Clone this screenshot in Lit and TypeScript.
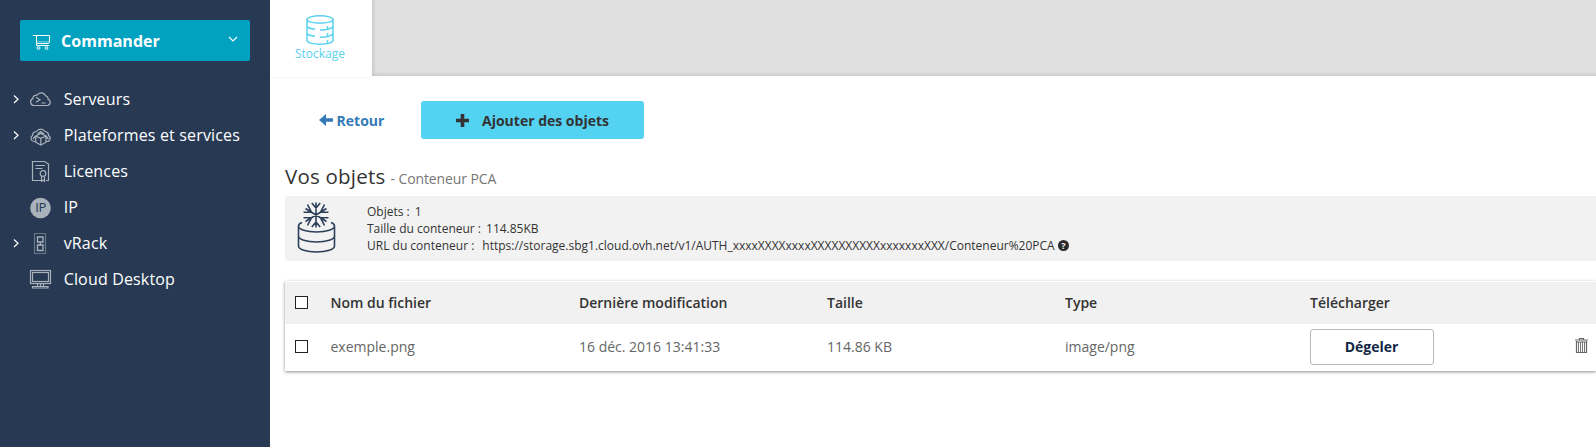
import { LitElement, html, css, svg } from "lit";
import { customElement } from "lit/decorators.js";

const icons: Record<string, unknown> = {
  server: svg`<path d="M4.500 14.500H4A3.600 3.600 0 0 1 2.800 7.600C3 5 5 3.900 7 4.200A4.800 4.800 0 0 1 15.500 4.800C17.300 5 18.300 6.500 18 8.300A3.200 3.200 0 0 1 17.500 14.500Z"/><path d="M6 6.200l4 2.500-4 2.500M11.500 12h4"/>`,
  platform: svg`<path d="M5.500 14.500H4A3.300 3.300 0 0 1 2.500 8.500C2.500 6 4.500 4.500 6.500 4.500A5 5 0 0 1 15 4.500C17.500 5 18.700 6.500 18.500 8.500A3.200 3.200 0 0 1 17 14.500H16"/><path d="M5.700 9 10.800 6.500 16 9v6.200l-5.200 2.800-5.100-2.800ZM5.700 9l5.100 2.400L16 9M10.800 11.400v6.600M7.500 7l3.300-2.500L14 7M3 12l2.500-3M18.500 12l-2.500-3"/>`,
  licence: svg`<path d="M11 17.500H2.500V-1.500h12l4 2.500v16.500H16"/><path d="M5.500 2.500h9.500M5.500 5.500h7"/><circle cx="13" cy="10.500" r="2.800"/><path d="M11.500 13.500v4.800l1.500-1.300 1.500 1.300v-4.800"/>`,
  ip: svg`<circle cx="10.500" cy="9" r="10.300" fill="#a9b1bb" stroke="none"/><text x="10.600" y="13.400" text-anchor="middle" font-size="13" fill="#283a53" stroke="none">IP</text>`,
  vrack: svg`<rect x="4.500" y="-1.500" width="11" height="20" stroke-dasharray="1 1"/><path d="M7.500 2h5.500v5h-5.500ZM7.500 10h5.500v5.500h-5.500ZM10.300 7v3" stroke-width="1.300"/>`,
  desktop: svg`<rect x=".5" y="-.5" width="20" height="13"/><rect x="2.500" y="1.500" width="16" height="9"/><path d="M7.500 12.500v3M13.500 12.500v3M10.500 12.500v3M2.500 15.500h15.500v1.500H2.500Z"/>`,
};

const menu = [
  { label: "Serveurs", icon: "server", open: true },
  { label: "Plateformes et services", icon: "platform", open: true },
  { label: "Licences", icon: "licence", open: false },
  { label: "IP", icon: "ip", open: false },
  { label: "vRack", icon: "vrack", open: true },
  { label: "Cloud Desktop", icon: "desktop", open: false },
];

@customElement("side-menu")
class SideMenu extends LitElement {
  static styles = css`
    :host { display: block; flex: 0 0 270px; box-sizing: border-box; padding: 20px 0 0; background: #283a53; color: #fff; font-size: 16px; }
    .order { display: flex; align-items: center; box-sizing: border-box; width: 230px; height: 41px; margin: 0 20px 20px; padding: 0 12px; border-radius: 2px; background: #00a2bf; font-weight: 700; letter-spacing: 0.03px; }
    .cart { width: 19px; height: 17px; margin: 4px 10px 0 0; }
    .down { width: 10px; height: 8px; margin: 0 0 4px auto; }
    svg { display: block; fill: none; stroke: #fff; overflow: visible; }
    .item { display: flex; align-items: center; height: 36px; letter-spacing: 0.16px; }
    .arrow { width: 6px; height: 10px; margin-left: 13px; }
    .hidden { visibility: hidden; }
    .icon { width: 21px; height: 18px; margin: 2px 12.700px 0 11px; stroke: #a9b1bb; stroke-width: 1.2; letter-spacing: -0.3px; }
  `;
  render() {
    return html`
      <div class="order">
        <svg class="cart" viewBox="0 0 19 17"><path d="M1 1.500h16.500v6.500l-1 1.500H4.500V2M4.500 9.500v2h13"/><path d="M5 7.800h12" stroke-opacity=".5"/><circle cx="6.500" cy="14" r="1.400"/><circle cx="14.500" cy="14" r="1.400"/></svg>
        <span>Commander</span>
        <svg class="down" viewBox="0 0 10 8"><path d="M1 2l4 4 4-4" stroke-width="1.100"/></svg>
      </div>
      ${menu.map((m) => html`<div class="item">
        <svg class="arrow ${m.open ? "" : "hidden"}" viewBox="0 0 6 10"><path d="M1 1.500 5 5.200 1 9" stroke-width="1.200"/></svg>
        <svg class="icon" viewBox="0 0 21 18">${icons[m.icon]}</svg>
        <span>${m.label}</span>
      </div>`)}
    `;
  }
}

@customElement("object-table")
class ObjectTable extends LitElement {
  static styles = css`
    :host { display: block; margin-top: 20px; padding-top: 1px; background: #fff; box-shadow: 0 1px 3px rgba(0, 0, 0, 0.45); font-size: 14px; line-height: 19px; color: #666; }
    .row { display: grid; grid-template-columns: 45.500px 248.500px 248px 238px 245px 1fr; align-items: center; height: 45px; padding-bottom: 2px; }
    .head { height: 42px; padding: 0; background: #f1f1f1; color: #333; font-weight: 600; }
    .cell { padding-bottom: 1px; }
    .check { width: 11px; height: 11px; margin: 0 0 1px 10px; border: 1px solid #222; background: #fff; }
    .action { display: flex; align-items: center; justify-content: space-between; padding-right: 8px; }
    .thaw { box-sizing: border-box; width: 124px; height: 36px; border: 1px solid #b7b7b7; border-radius: 3px; background: #fff; color: #122844; font: 700 14px/34px "Open Sans", sans-serif; padding: 0 1px 0 0; }
    .trash { width: 13px; height: 16px; margin-top: -3px; fill: none; stroke: #666; }
  `;
  render() {
    return html`
      <div class="row head">
        <div class="check"></div><div class="cell">Nom du fichier</div><div class="cell">Dernière modification</div><div class="cell">Taille</div><div class="cell">Type</div><div class="cell">Télécharger</div>
      </div>
      <div class="row">
        <div class="check"></div><div class="cell">exemple.png</div><div class="cell">16 déc. 2016 13:41:33</div><div class="cell">114.86 KB</div><div class="cell">image/png</div>
        <div class="action">
          <button class="thaw">Dégeler</button>
          <svg class="trash" viewBox="0 0 13 16"><path d="M0 3h13M4.500 3V1.500h4V3M1.500 5h10M1.500 4v11.500h10V4" stroke-width="1.200"/><path d="M3.500 5v10M5.500 5v10M7.500 5v10M9.500 5v10" stroke-width=".9"/></svg>
        </div>
      </div>
    `;
  }
}

@customElement("app-root")
class AppRoot extends LitElement {
  static styles = css`
    :host { display: flex; height: 447px; overflow: hidden; background: #fff; color: #333; font-family: "Open Sans", sans-serif; }
    svg { display: block; fill: none; }
    .main { flex: 1; min-width: 0; }
    .tabs { display: flex; height: 76px; }
    .tab { display: flex; flex-direction: column; align-items: center; box-sizing: border-box; width: 102px; height: 77px; padding: 15px 2px 0 0; background: #fff; box-shadow: 0 1px 2px rgba(0, 0, 0, 0.05); color: #59d2ef; font-size: 12px; line-height: 17px; }
    .disk { width: 28px; height: 30px; stroke: #59d2ef; stroke-width: 1.500; }
    .fill { flex: 1; margin: -8px -8px 0 0; background: #e0e0e0; box-shadow: inset 1px -1px 4px rgba(0, 0, 0, 0.15); }
    .tools { display: flex; align-items: center; height: 38px; margin: 25px 0 0 49px; font-size: 14px; font-weight: 700; }
    .back { display: flex; align-items: center; gap: 2.600px; width: 102px; color: #337ab7; }
    .left { width: 15px; height: 12px; fill: #337ab7; }
    .add { display: flex; align-items: center; box-sizing: border-box; width: 223px; height: 38px; padding-left: 35px; gap: 13px; border-radius: 3px; background: #54d2f2; }
    .plus { width: 13px; height: 13px; stroke: #333; stroke-width: 3.600; }
    .body { margin-left: 15px; }
    .title { display: flex; align-items: baseline; gap: 5px; margin-top: 24px; height: 33px; font-size: 20.500px; line-height: 27px; letter-spacing: 0.22px; }
    .sub { font-size: 14px; letter-spacing: -0.1px; color: #777; }
    .panel { display: flex; height: 65px; border-radius: 3px 0 0 3px; background: #f2f2f2; }
    .cold { width: 40px; height: 54px; margin: 4px 30px 0 12px; stroke: #2d4059; stroke-width: 1.600; }
    .info { padding-top: 7px; font-size: 12px; line-height: 17px; }
    .line { display: flex; align-items: center; gap: 5px; height: 17px; }
    .url { gap: 8px; }
    .help { width: 11px; height: 11px; margin-left: -5px; }
    .mark { font: 700 9px "Open Sans", sans-serif; fill: #f2f2f2; }
  `;
  render() {
    return html`
      <side-menu></side-menu>
      <div class="main">
        <div class="tabs">
          <div class="tab">
            <svg class="disk" viewBox="0 0 28 30"><ellipse cx="14" cy="4.500" rx="13" ry="3.700"/><path d="M1 4.500v21c0 2 6 3.700 13 3.700s13-1.700 13-3.700v-21M1 11.500c1 1.300 4 2.300 8 2.800M14 15c5 0 11-1 13-3.500M1 18.500c1 1.300 4 2.300 8 2.800M14 22.200c5 0 11-1 13-3.500M21.500 11v3M21.500 18v3M21.500 25v3"/></svg>
            <span>Stockage</span>
          </div>
          <div class="fill"></div>
        </div>
        <div class="tools">
          <div class="back"><svg class="left" viewBox="0 0 15 12"><path d="M0 6 7 0v4.200h7v3.600H7V12Z"/></svg><span>Retour</span></div>
          <div class="add"><svg class="plus" viewBox="0 0 13 13"><path d="M6.500 0v13M0 6.500h13"/></svg><span>Ajouter des objets</span></div>
        </div>
        <div class="body">
          <div class="title"><span>Vos objets</span><span class="sub">- Conteneur PCA</span></div>
          <div class="panel">
            <svg class="cold" viewBox="0 0 40 54">
              <path d="M19 2.500v25M8.500 8.500l21 13M29.500 8.500l-21 13M14.800 3l4.200 5 4.200-5M14.800 27l4.200-5 4.200 5M6.500 12.300h8L10.500 4.500M31.500 12.300h-8L27.500 4.500M6.500 17.700h8L10.500 25.500M31.500 17.700h-8L27.500 25.500"/>
              <path d="M5 22.500c-2 .8-3.500 1.800-3.500 3.500 0 3.500 8 6 18 6s18-2.500 18-6c0-1.700-1.500-2.700-3.500-3.500M1.500 26v20c0 3.500 8 6 18 6s18-2.500 18-6V26M1.500 36c0 3.500 8 6 18 6s18-2.500 18-6"/>
            </svg>
            <div class="info">
              <div class="line"><span>Objets :</span><span>1</span></div>
              <div class="line"><span>Taille du conteneur :</span><span>114.85KB</span></div>
              <div class="line url"><span>URL du conteneur :</span><span>https://storage.sbg1.cloud.ovh.net/v1/AUTH_xxxxXXXXxxxxXXXXXXXXXXxxxxxxxXXX/Conteneur%20PCA</span>
                <svg class="help" viewBox="0 0 11 11"><circle cx="5.500" cy="5.500" r="5.500" fill="#2b2b2b"/><text class="mark" x="5.500" y="8.800" text-anchor="middle">?</text></svg></div>
            </div>
          </div>
          <object-table></object-table>
        </div>
      </div>
    `;
  }
}
